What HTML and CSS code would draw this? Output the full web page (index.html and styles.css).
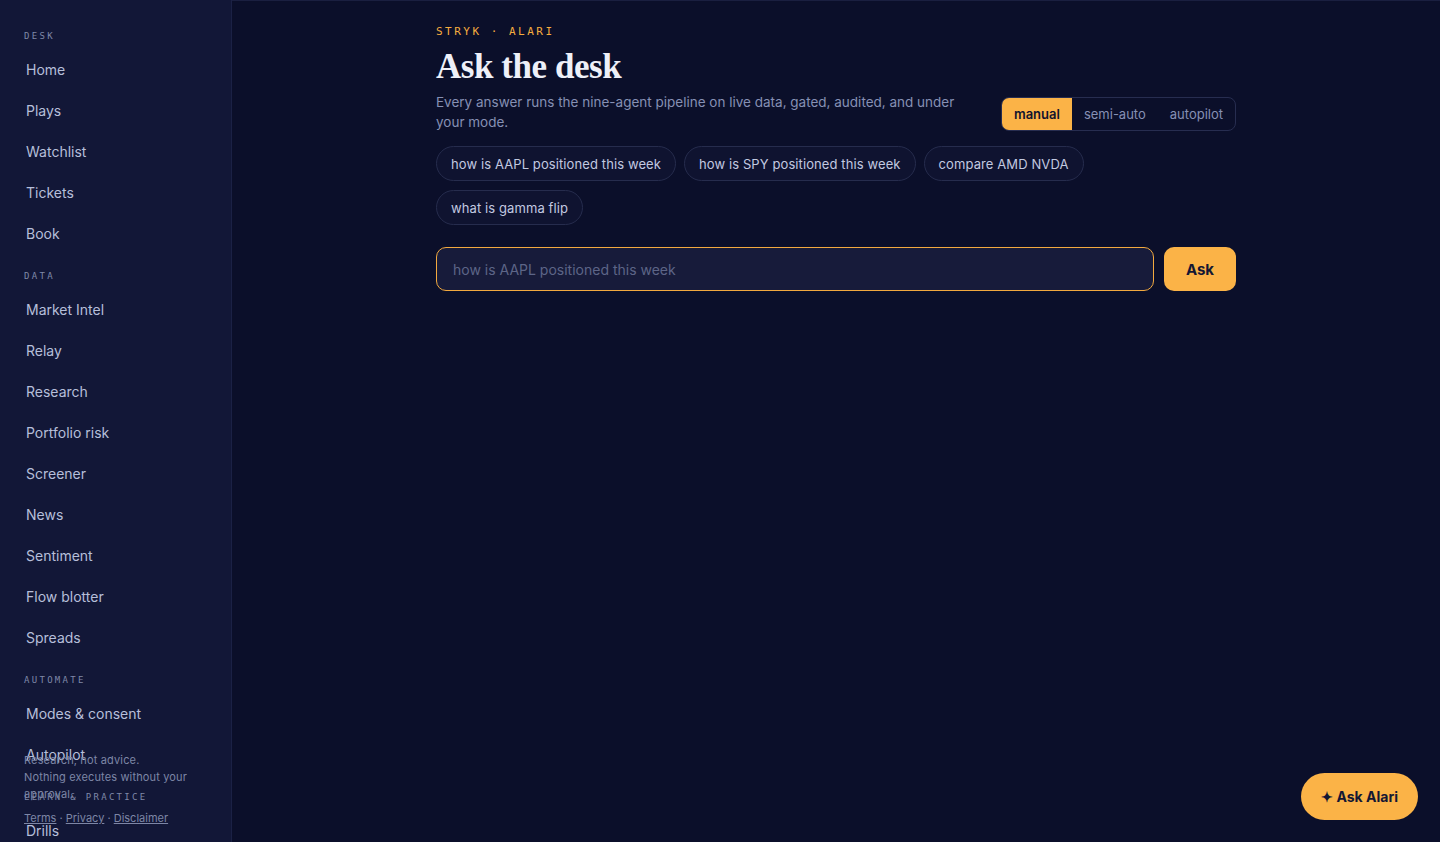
FILE: index.html
```html
<!DOCTYPE html>
<html lang="en">
<head>
<meta charset="utf-8">
<title>Ask the desk</title>
<link rel="stylesheet" href="styles.css">
</head>
<body>
<div class="app">
  <aside class="sidebar">
    <nav class="nav">
      <div class="nav-label">DESK</div>
      <a class="nav-item">Home</a>
      <a class="nav-item">Plays</a>
      <a class="nav-item">Watchlist</a>
      <a class="nav-item">Tickets</a>
      <a class="nav-item">Book</a>
      <div class="nav-label">DATA</div>
      <a class="nav-item">Market Intel</a>
      <a class="nav-item">Relay</a>
      <a class="nav-item">Research</a>
      <a class="nav-item">Portfolio risk</a>
      <a class="nav-item">Screener</a>
      <a class="nav-item">News</a>
      <a class="nav-item">Sentiment</a>
      <a class="nav-item">Flow blotter</a>
      <a class="nav-item">Spreads</a>
      <div class="nav-label">AUTOMATE</div>
      <a class="nav-item">Modes &amp; consent</a>
      <a class="nav-item">Autopilot</a>
      <div class="nav-label">LEARN &amp; PRACTICE</div>
      <a class="nav-item">Drills</a>
    </nav>
    <div class="side-footer">
      <p class="disclaimer">Research, not advice.<br>Nothing executes without your approval.</p>
      <p class="links"><a>Terms</a> · <a>Privacy</a> · <a>Disclaimer</a></p>
    </div>
  </aside>
  <main class="main">
    <div class="content">
      <div class="eyebrow">STRYK · ALARI</div>
      <h1 class="title">Ask the desk</h1>
      <div class="head-row">
        <p class="lede">Every answer runs the nine-agent pipeline on live data, gated, audited, and under your mode.</p>
        <div class="modes">
          <span class="mode active">manual</span>
          <span class="mode">semi-auto</span>
          <span class="mode">autopilot</span>
        </div>
      </div>
      <div class="chips">
        <button class="chip">how is AAPL positioned this week</button>
        <button class="chip">how is SPY positioned this week</button>
        <button class="chip">compare AMD NVDA</button>
        <button class="chip">what is gamma flip</button>
      </div>
      <form class="ask-row">
        <input class="ask-input" type="text" placeholder="how is AAPL positioned this week">
        <button class="ask-btn" type="button">Ask</button>
      </form>
    </div>
  </main>
  <button class="fab">✦ Ask Alari</button>
</div>
</body>
</html>
```

FILE: styles.css
```css
* { box-sizing: border-box; }
html, body { margin: 0; padding: 0; height: 100%; }
body {
  background: #0b0f2a;
  color: #c9cfe4;
  font-family: Inter, "Noto Sans", sans-serif;
  overflow: hidden;
}
.app {
  display: flex;
  height: 842px;
}
.sidebar {
  position: relative;
  width: 232px;
  flex: 0 0 232px;
  background: #121737;
  border-right: 1px solid #1b2145;
  overflow: hidden;
}
.nav {
  display: flex;
  flex-direction: column;
  padding: 31px 0 0 0;
}
.nav-label {
  font-family: "DejaVu Sans Mono", "Liberation Mono", monospace;
  font-size: 9px;
  letter-spacing: 2.3px;
  color: #7f88a8;
  padding-left: 24px;
  height: 11px;
  line-height: 11px;
  margin-bottom: 18px;
}
.nav-item {
  display: block;
  font-size: 14px;
  line-height: 20px;
  color: #b6bfda;
  padding: 0 0 0 26px;
  margin-bottom: 21px;
  cursor: pointer;
}
.nav-item + .nav-label { margin-top: 6px; }
.side-footer {
  position: absolute;
  left: 24px;
  right: 16px;
  bottom: 15px;
  font-size: 11px;
  line-height: 17px;
  color: #7d86a6;
}
.side-footer p { margin: 0; }
.disclaimer {
  letter-spacing: 0.15px;
  margin-bottom: 7px !important;
}
.links a {
  color: #7d86a6;
  text-decoration: underline;
}
.main {
  flex: 1;
  border-top: 1px solid #1a1f40;
  display: flex;
  justify-content: center;
}
.content {
  width: 800px;
  padding-top: 24px;
}
.eyebrow {
  font-family: "DejaVu Sans Mono", "Liberation Mono", monospace;
  font-size: 11px;
  letter-spacing: 2.5px;
  color: #f5ac3f;
  line-height: 14px;
}
.title {
  margin: 8px 0 0 0;
  font-family: "Liberation Serif", "DejaVu Serif", serif;
  font-weight: bold;
  font-size: 35px;
  letter-spacing: -0.45px;
  line-height: 40px;
  color: #eef0f8;
}
.head-row {
  display: flex;
  justify-content: space-between;
  align-items: flex-start;
  margin-top: 5px;
}
.lede {
  margin: 0;
  width: 540px;
  font-size: 13.5px;
  line-height: 20px;
  color: #8690b4;
}
.modes {
  display: flex;
  border: 1px solid #272d50;
  border-radius: 8px;
  overflow: hidden;
  margin-top: 5px;
}
.mode {
  font-size: 13px;
  line-height: 32px;
  padding: 0 12px;
  color: #8690b4;
}
.mode.active {
  background: #fbb347;
  color: #11142e;
  font-weight: 600;
}
.chips {
  display: flex;
  flex-wrap: wrap;
  gap: 9px 8px;
  margin-top: 14px;
  width: 700px;
}
.chip {
  font-family: Inter, "Noto Sans", sans-serif;
  font-size: 13px;
  letter-spacing: 0.1px;
  height: 35px;
  padding: 0 14px;
  border-radius: 18px;
  border: 1px solid #262c4d;
  background: #0f1330;
  color: #c2c9e0;
  cursor: pointer;
}
.ask-row {
  display: flex;
  gap: 10px;
  margin: 22px 0 0 0;
}
.ask-input {
  flex: 1;
  height: 44px;
  border: 1px solid #f2a93f;
  border-radius: 10px;
  background: #171b3a;
  color: #d0d6ea;
  font-family: Inter, "Noto Sans", sans-serif;
  font-size: 14px;
  padding: 0 16px;
  outline: none;
}
.ask-input::placeholder { color: #5d6587; }
.ask-btn {
  width: 72px;
  height: 44px;
  border: none;
  border-radius: 10px;
  background: #fbb347;
  color: #141733;
  font-family: Inter, "Noto Sans", sans-serif;
  font-weight: 700;
  font-size: 15px;
  cursor: pointer;
}
.fab {
  position: fixed;
  right: 22px;
  bottom: 22px;
  height: 47px;
  padding: 0 20px;
  border: none;
  border-radius: 24px;
  background: #fbb347;
  color: #141733;
  font-family: Inter, "Noto Sans", sans-serif;
  font-weight: 700;
  font-size: 14px;
  cursor: pointer;
}
```
